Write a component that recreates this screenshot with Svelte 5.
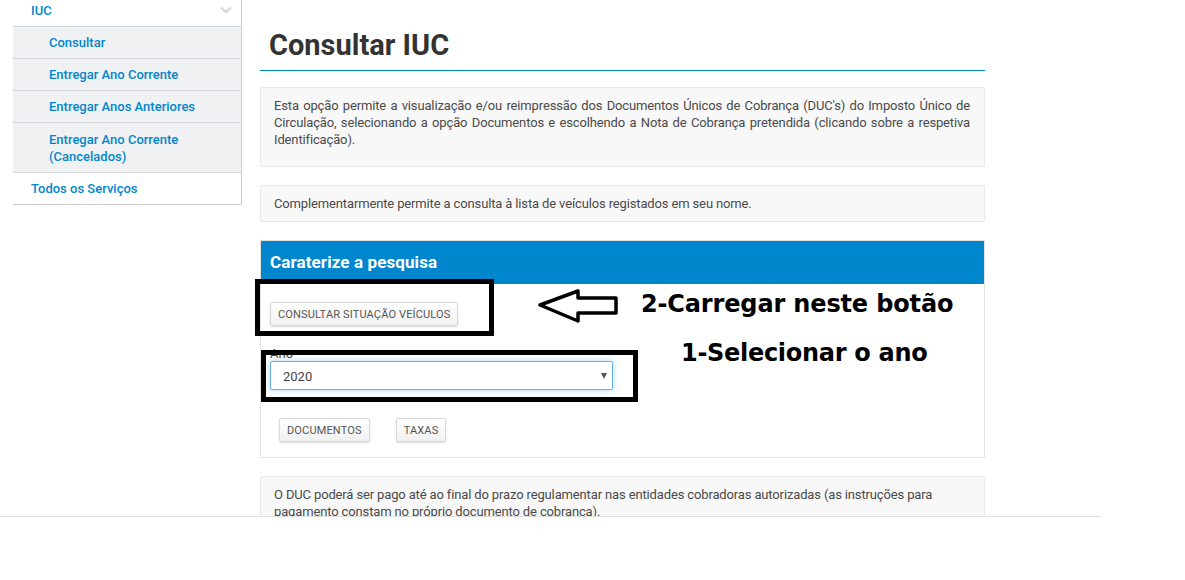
<script lang="ts">
  const submenu = ["Consultar", "Entregar Ano Corrente", "Entregar Anos Anteriores", "Entregar Ano Corrente (Cancelados)"];
</script>

<div class="page">
  <nav class="sidebar">
    <a class="item" href="#iuc">
      IUC
      <svg class="chevron" width="12" height="8" viewBox="0 0 12 8"><path d="M1 1.5 6 6l5-4.500" fill="none" stroke="#d3d5d8" stroke-width="2.200" /></svg>
    </a>
    {#each submenu as label}
      <a class="item sub" href="#iuc">{label}</a>
    {/each}
    <a class="item" href="#todos">Todos os Serviços</a>
  </nav>

  <main class="content">
    <h1>Consultar IUC</h1>

    <p class="well first">
      Esta opção permite a visualização e/ou reimpressão dos Documentos Únicos de Cobrança (DUC's) do Imposto Único de Circulação, selecionando a opção Documentos e escolhendo a Nota de Cobrança pretendida (clicando sobre a respetiva Identificação).
    </p>
    <p class="well">Complementarmente permite a consulta à lista de veículos registados em seu nome.</p>

    <section class="panel">
      <h2>Caraterize a pesquisa</h2>
      <div class="panel-body">
        <button class="btn">CONSULTAR SITUAÇÃO VEÍCULOS</button>
        <label class="field">
          <span>Ano</span>
          <div class="select">2020<i class="caret"></i></div>
        </label>
        <div class="actions">
          <button class="btn">DOCUMENTOS</button>
          <button class="btn">TAXAS</button>
        </div>
      </div>

      <div class="mark mark-btn"></div>
      <div class="mark mark-select"></div>
    </section>

    <p class="well">
      O DUC poderá ser pago até ao final do prazo regulamentar nas entidades cobradoras autorizadas (as instruções para pagamento constam no próprio documento de cobrança).
    </p>
  </main>

  <svg class="arrow" width="82" height="34" viewBox="0 0 82 34">
    <path d="M2 16 40 2v7h38v15H40v8z" fill="#fff" stroke="#000" stroke-width="3.500" stroke-linejoin="round" />
  </svg>
  <div class="note note-2">2-Carregar neste botão</div>
  <div class="note note-1">1-Selecionar o ano</div>
</div>

<style>
  :global(body) {
    margin: 0;
    background: #fff;
    font-family: Roboto, "Liberation Sans", sans-serif;
    font-size: 13px;
    color: #444;
  }

  .page {
    position: relative;
    display: flex;
    align-items: flex-start;
    box-sizing: border-box;
    width: 1101px;
    height: 517px;
    overflow: hidden;
    border-bottom: 1px solid #e0e0e0;
  }

  .sidebar {
    flex: none;
    width: 228px;
    margin: -5px 0 0 13px;
    border-right: 1px solid #ccc;
    border-bottom: 1px solid #ccc;
  }

  .item {
    position: relative;
    display: block;
    box-sizing: border-box;
    padding: 7px 18px;
    line-height: 17px;
    font-weight: 500;
    color: #0086cd;
    text-decoration: none;
    border-bottom: 1px solid #d4d6d9;
  }

  .item:last-child {
    border-bottom: 0;
  }

  .sub {
    padding-left: 36px;
    padding-right: 40px;
    background: #f0f1f3;
  }

  .sub:nth-child(5) {
    padding-top: 8px;
  }

  .chevron {
    position: absolute;
    top: 11px;
    right: 9px;
  }

  .content {
    flex: none;
    width: 725px;
    margin-left: 18px;
  }

  h1 {
    margin: 0 0 16px;
    padding: 28px 9px 8px;
    font-size: 29px;
    line-height: 34px;
    font-weight: 700;
    color: #333;
    border-bottom: 1px solid #0086cd;
  }

  .well {
    box-sizing: border-box;
    margin: 0 0 18px;
    padding: 9px 14px 9px 13px;
    line-height: 17px;
    letter-spacing: -0.140px;
    color: #4a4a4a;
    background: #f8f8f8;
    border: 1px solid #e8e8e8;
    border-radius: 2px;
  }

  .well.first {
    height: 80px;
    text-align: justify;
  }

  .panel {
    position: relative;
    box-sizing: border-box;
    height: 218px;
    margin-bottom: 18px;
    border: 1px solid #e3e3e3;
  }

  h2 {
    margin: 0;
    padding: 0 9px;
    font-size: 17px;
    letter-spacing: 0.100px;
    line-height: 43px;
    font-weight: 700;
    color: #fff;
    background: #0086cd;
  }

  .panel-body {
    display: flex;
    flex-direction: column;
    align-items: flex-start;
    padding: 18px 9px 0;
  }

  .btn {
    box-sizing: border-box;
    height: 24px;
    padding: 0 7px;
    font-family: inherit;
    font-size: 11px;
    letter-spacing: 0.150px;
    color: #555;
    background: linear-gradient(#fff, #f1f1f1);
    border: 1px solid #d8d8d8;
    border-radius: 2px;
    box-shadow: 0 1px 2px rgba(0, 0, 0, 0.150);
  }

  .field {
    display: block;
    margin-top: 21px;
  }

  .field span {
    display: block;
    height: 14px;
    line-height: 14px;
  }

  .select {
    position: relative;
    box-sizing: border-box;
    width: 343px;
    height: 29px;
    padding-left: 12px;
    line-height: 29px;
    color: #444;
    background: #fff;
    border: 1px solid #66afe9;
    border-radius: 2px;
    box-shadow: 0 0 6px rgba(102, 175, 233, 0.500);
  }

  .caret {
    position: absolute;
    top: 11px;
    right: 5px;
    border-top: 6px solid #555;
    border-left: 3px solid transparent;
    border-right: 3px solid transparent;
  }

  .actions {
    display: flex;
    gap: 26px;
    margin: 28px 0 0 9px;
  }

  .mark {
    position: absolute;
    box-sizing: border-box;
    border: 5px solid #000;
  }

  .mark-btn {
    top: 38px;
    left: -6px;
    width: 239px;
    height: 57px;
  }

  .mark-select {
    top: 109px;
    left: 0;
    width: 377px;
    height: 52px;
  }

  .arrow {
    position: absolute;
    top: 289px;
    left: 538px;
  }

  .note {
    position: absolute;
    font-family: "DejaVu Sans", sans-serif;
    font-size: 24px;
    line-height: 30px;
    letter-spacing: -0.150px;
    font-weight: 700;
    color: #000;
    white-space: nowrap;
  }

  .note-2 {
    top: 289px;
    left: 641px;
  }

  .note-1 {
    top: 338px;
    left: 681px;
    letter-spacing: -0.300px;
  }
</style>
